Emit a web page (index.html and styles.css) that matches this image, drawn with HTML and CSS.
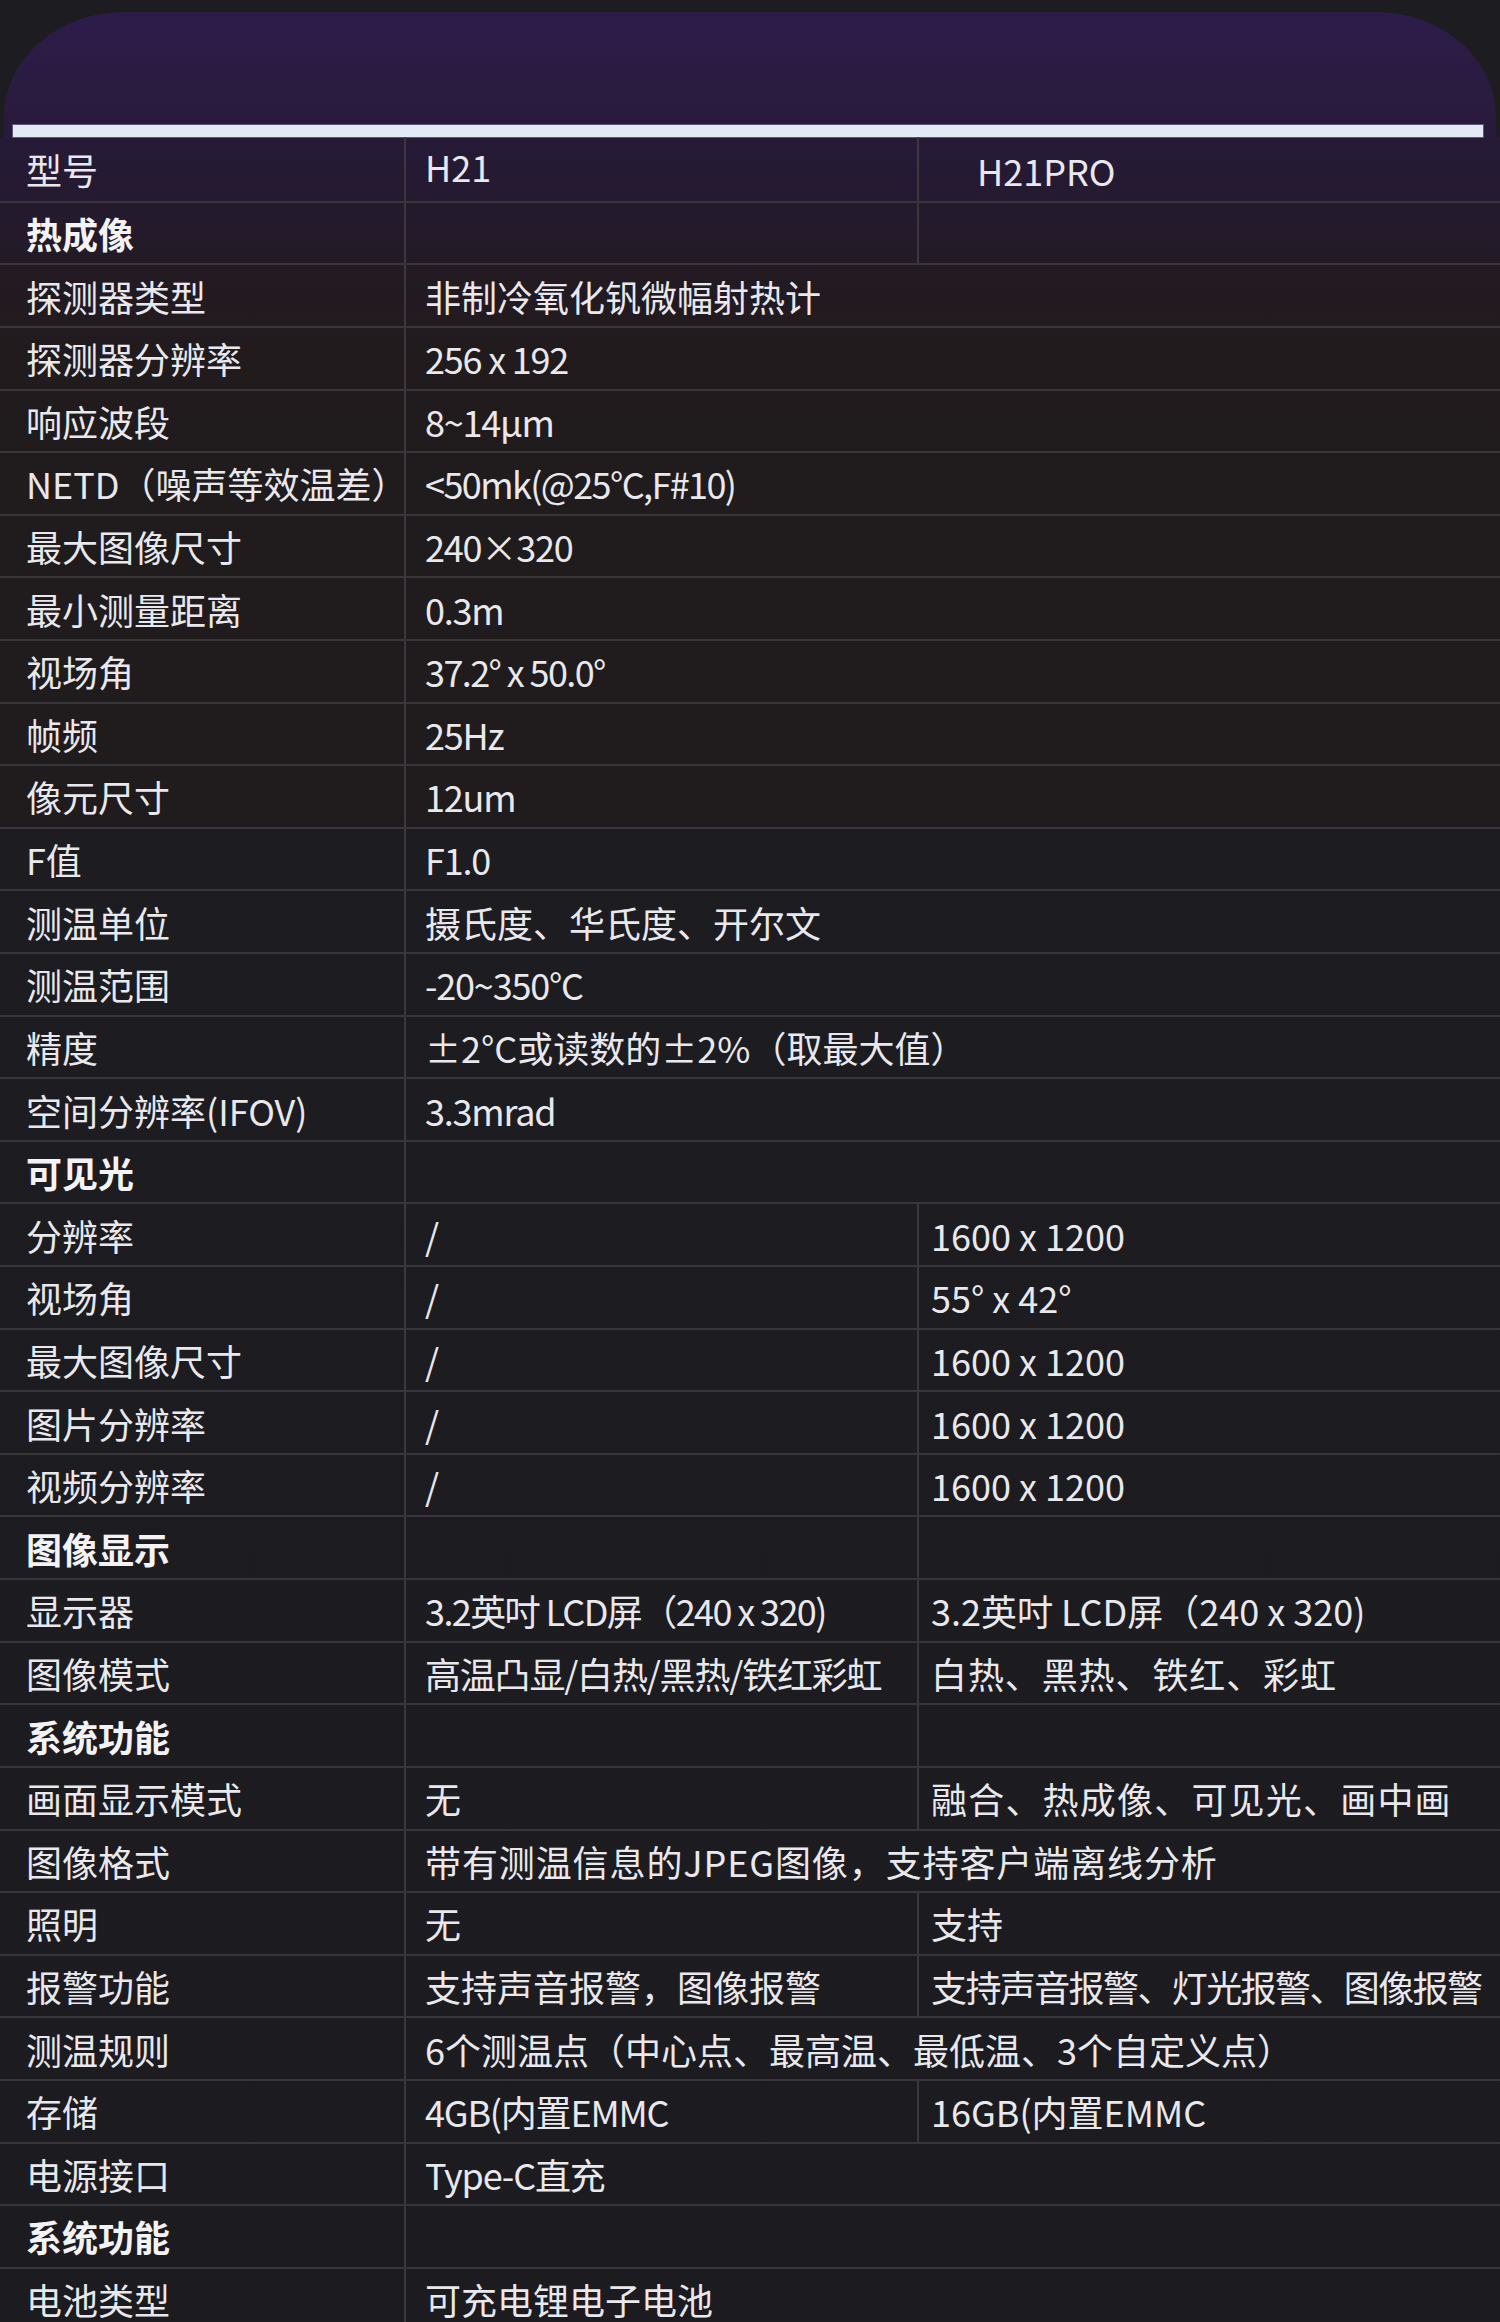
FILE: index.html
```html
<!DOCTYPE html>
<html lang="zh-CN">
<head>
<meta charset="utf-8">
<title>H21 / H21PRO 参数</title>
<link rel="stylesheet" href="styles.css">
</head>
<body>
<div class="page">
  <div class="hero"><div class="bar"></div></div>
  <div class="table">
    <div class="row head"><div class="cell label">型号</div><div class="cell v up">H21</div><div class="cell v v3 pro">H21PRO</div></div>
    <div class="row"><div class="cell label bold">热成像</div><div class="cell v"></div><div class="cell v v3"></div></div>
    <div class="row"><div class="cell label">探测器类型</div><div class="cell v span2">非制冷氧化钒微幅射热计</div></div>
    <div class="row"><div class="cell label">探测器分辨率</div><div class="cell v span2 t1">256 x 192</div></div>
    <div class="row"><div class="cell label">响应波段</div><div class="cell v span2 t1">8~14μm</div></div>
    <div class="row"><div class="cell label">NETD（噪声等效温差）</div><div class="cell v span2 t2">&lt;50mk(@25°C,F#10)</div></div>
    <div class="row"><div class="cell label">最大图像尺寸</div><div class="cell v span2 t1">240×320</div></div>
    <div class="row"><div class="cell label">最小测量距离</div><div class="cell v span2 t1">0.3m</div></div>
    <div class="row"><div class="cell label">视场角</div><div class="cell v span2 t2">37.2° x 50.0°</div></div>
    <div class="row"><div class="cell label">帧频</div><div class="cell v span2 t1">25Hz</div></div>
    <div class="row"><div class="cell label">像元尺寸</div><div class="cell v span2 t1">12um</div></div>
    <div class="row"><div class="cell label">F值</div><div class="cell v span2 t1">F1.0</div></div>
    <div class="row"><div class="cell label">测温单位</div><div class="cell v span2">摄氏度、华氏度、开尔文</div></div>
    <div class="row"><div class="cell label">测温范围</div><div class="cell v span2 t1">-20~350°C</div></div>
    <div class="row"><div class="cell label">精度</div><div class="cell v span2">±2°C或读数的±2%（取最大值）</div></div>
    <div class="row"><div class="cell label">空间分辨率(IFOV)</div><div class="cell v span2 t1">3.3mrad</div></div>
    <div class="row"><div class="cell label bold">可见光</div><div class="cell v span2"></div></div>
    <div class="row"><div class="cell label">分辨率</div><div class="cell v">/</div><div class="cell v v3">1600 x 1200</div></div>
    <div class="row"><div class="cell label">视场角</div><div class="cell v">/</div><div class="cell v v3">55° x 42°</div></div>
    <div class="row"><div class="cell label">最大图像尺寸</div><div class="cell v">/</div><div class="cell v v3">1600 x 1200</div></div>
    <div class="row"><div class="cell label">图片分辨率</div><div class="cell v">/</div><div class="cell v v3">1600 x 1200</div></div>
    <div class="row"><div class="cell label">视频分辨率</div><div class="cell v">/</div><div class="cell v v3">1600 x 1200</div></div>
    <div class="row"><div class="cell label bold">图像显示</div><div class="cell v"></div><div class="cell v v3"></div></div>
    <div class="row"><div class="cell label">显示器</div><div class="cell v t2">3.2英吋 LCD屏（240 x 320)</div><div class="cell v v3">3.2英吋 LCD屏（240 x 320)</div></div>
    <div class="row"><div class="cell label">图像模式</div><div class="cell v t1">高温凸显/白热/黑热/铁红彩虹</div><div class="cell v v3 w1">白热、黑热、铁红、彩虹</div></div>
    <div class="row"><div class="cell label bold">系统功能</div><div class="cell v"></div><div class="cell v v3"></div></div>
    <div class="row"><div class="cell label">画面显示模式</div><div class="cell v">无</div><div class="cell v v3 w2">融合、热成像、可见光、画中画</div></div>
    <div class="row"><div class="cell label">图像格式</div><div class="cell v span2 w1">带有测温信息的JPEG图像，支持客户端离线分析</div></div>
    <div class="row"><div class="cell label">照明</div><div class="cell v">无</div><div class="cell v v3">支持</div></div>
    <div class="row"><div class="cell label">报警功能</div><div class="cell v">支持声音报警，图像报警</div><div class="cell v v3 t2">支持声音报警、灯光报警、图像报警</div></div>
    <div class="row"><div class="cell label">测温规则</div><div class="cell v span2">6个测温点（中心点、最高温、最低温、3个自定义点）</div></div>
    <div class="row"><div class="cell label">存储</div><div class="cell v t1">4GB(内置EMMC</div><div class="cell v v3">16GB(内置EMMC</div></div>
    <div class="row"><div class="cell label">电源接口</div><div class="cell v span2 t1">Type-C直充</div></div>
    <div class="row"><div class="cell label bold">系统功能</div><div class="cell v span2"></div></div>
    <div class="row"><div class="cell label">电池类型</div><div class="cell v span2">可充电锂电子电池</div></div>
  </div>
</div>
</body>
</html>
```
FILE: styles.css
```css
html, body {
  margin: 0;
  padding: 0;
  background: #1d1c21;
}
body {
  width: 1500px;
  overflow: hidden;
  font-family: "Noto Sans CJK SC", "Noto Sans", sans-serif;
  color: #e8e8ed;
}
.page {
  padding-top: 12px;
}
.hero {
  margin: 0 4px;
  height: 125px;
  box-sizing: border-box;
  border-radius: 120px 120px 0 0 / 105px 105px 0 0;
  background: linear-gradient(to bottom, #2d1c4b 0%, #2a1b40 70%, #281a3a 100%);
  display: flex;
  flex-direction: column;
  justify-content: flex-end;
  padding: 0 13px 0 9px;
}
.bar {
  height: 12px;
  background: #e3e9f5;
  box-shadow: 0 0 0 1px #5c5872;
}
.table {
  background: linear-gradient(to bottom,
    #261a37 0px,
    #241a2b 100px,
    #231a22 140px,
    #211b1d 220px,
    #201b1c 680px,
    #1d1c21 700px,
    #1c1b20 2200px);
}
.row {
  display: grid;
  grid-template-columns: 404px 513px 1fr;
  height: 62.62px;
  box-sizing: border-box;
  border-bottom: 2px solid #38353b;
}
.row.head {
  height: 65.7px;
}
.cell {
  display: flex;
  align-items: center;
  white-space: nowrap;
  font-size: 36px;
  line-height: 1;
  overflow: visible;
}
.label {
  padding-left: 26px;
}
.bold {
  font-weight: 700;
  color: #f3f3f6;
}
.v {
  border-left: 2px solid #3a373e;
  padding-left: 19px;
}
.v3 {
  padding-left: 12px;
}
.span2 {
  grid-column: 2 / 4;
}
.t1 {
  letter-spacing: -1.2px;
}
.t2 {
  letter-spacing: -1.6px;
}
.w1 {
  letter-spacing: 0.9px;
}
.w2 {
  letter-spacing: 1.2px;
}
.up {
  padding-bottom: 6px;
}
.pro {
  padding-left: 58px;
  padding-top: 2px;
}
```
